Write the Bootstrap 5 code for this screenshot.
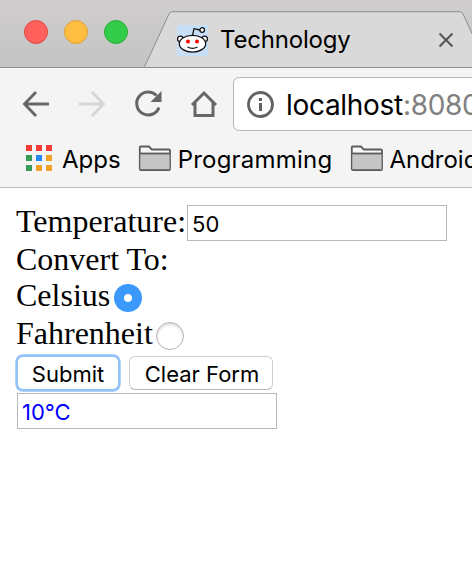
<!DOCTYPE html>
<html lang="en">
<head>
<meta charset="utf-8">
<meta name="viewport" content="width=device-width, initial-scale=1">
<title>Technology</title>
<link href="https://cdn.jsdelivr.net/npm/bootstrap@5.3.0/dist/css/bootstrap.min.css" rel="stylesheet">
<style>
body{width:472px;height:566px;font-family:Inter,"Liberation Sans",sans-serif;font-size:24px;line-height:30px;color:#000;background:#fff}
svg{display:block;flex:none}
.strip{height:68px;background:linear-gradient(#d0cecd,#c4c4c4);border-bottom:1px solid #8e8e8e}
.lights{gap:16px;padding:20px 0 0 24px}
.light{width:24px;height:24px;border:1px solid #df4744;background:#fe605b}
.light.amber{border-color:#dea034;background:#febe41}
.light.green{border-color:#24ae38;background:#34ca4a}
.tab{width:344px;height:56px;margin:11px 0 0 16px;padding-left:33px}
.tab-shape{left:0;top:0}
.favicon{margin-top:3px}
.tab-title{margin:1px 0 0 12px;letter-spacing:-.2px}
.tab-close{margin:2px 34px 0 auto}
.toolbar-row{height:72px;padding:9px 0 0 22px;background:#f4f4f4}
.nav-icons{height:54px}
.omni{width:300px;height:54px;margin-left:15px;padding-left:12px;border:1px solid #b5b5b5;border-radius:6px;background:#fff;font-size:28px}
.omni-text{margin:2px 0 0 12px;letter-spacing:-.3px}
.port{color:#808080}
.bookmarks{height:48px;background:#f4f4f4;border-bottom:1px solid #bcbcbc;padding:0 0 11px 26px}
.bookmarks span{margin-top:3px}
.apps{width:26px;grid-template-columns:repeat(3,6px);gap:4px;margin-right:10px}
.apps i{width:6px;height:6px;background:#f1a325}
.apps .r{background:#f33b36}.apps .g{background:#379c57}.apps .b{background:#2489f4}
.prog{margin-left:5px;letter-spacing:.22px}
.page{padding:14px 0 0 16px;font-family:"Liberation Serif",serif;font-size:32px}
.line{height:37px;line-height:37px}
.line.tall{height:38px;line-height:38px}
.line.drop{padding-top:1px}
.field{width:260px;height:36px;border:1px solid #b9b9b9;border-radius:0;padding:2px 4px 0;background:#fff;font-family:Inter,"Liberation Sans",sans-serif;font-size:22px;line-height:32px;color:#000;outline:0}
#temp{margin:4px 0 0 1px}
.field.result{color:#00f;margin:3px 0 0 1px}
.dot{width:28px;height:28px;margin:6px 0 0 3px;appearance:none;border:1px solid #b2b2b2;border-radius:50%;background:#fff;box-shadow:inset 0 2px 3px #ddd}
.dot:checked{margin:4px 0 0 4px;border:0;background:radial-gradient(circle,#fff 0 3.6px,#3b99fc 4.4px);box-shadow:none}
.push{height:34px;padding:2px 0 0;border:1px solid #cfcfcf;border-bottom-color:#b5b5b5;border-radius:6px;background:#fff;color:#000;font-family:Inter,"Liberation Sans",sans-serif;font-size:22px;line-height:30px}
.push.main{width:100px;height:32px;margin:1px 11px 0 2px;border:0;box-shadow:0 0 0 2.7px #91c3f8;border-radius:5px}
.push.wide{width:144px;padding-left:2px}
</style>
<script src="https://cdn.jsdelivr.net/npm/bootstrap@5.3.0/dist/js/bootstrap.bundle.min.js"></script>
</head>
<body class="overflow-hidden">
<header class="overflow-hidden">
  <div class="strip d-flex overflow-hidden">
    <div class="lights d-flex flex-shrink-0"><span class="light rounded-circle"></span><span class="light amber rounded-circle"></span><span class="light green rounded-circle"></span></div>
    <div class="tab position-relative d-flex align-items-center flex-shrink-0">
      <svg class="tab-shape position-absolute" width="344" height="57"><path d="M0 57L25 3Q26 .7 28 .7H316Q318 .7 319 3L344 57" fill="#d9d9d9" stroke="#8e8e8e"/></svg>
      <svg class="favicon position-relative" width="31" height="31" viewBox="0 0 31 31"><path fill="#c6def6" d="M0 0h31v31H0z"/><g fill="#fff" stroke="#111" stroke-width="1.3"><circle cx="3.3" cy="14" r="2.8"/><circle cx="27.7" cy="14" r="2.8"/><ellipse cx="15.5" cy="18.7" rx="13.2" ry="8.4"/><path d="M15.500 10.500L17 3.700L23 5" fill="none"/><circle cx="25.2" cy="5" r="2.3"/><path d="M10.500 22q5 2.800 10 0" fill="none"/></g><circle cx="11" cy="16.4" r="2" fill="#f00"/><circle cx="20" cy="16.4" r="2" fill="#f00"/></svg>
      <span class="tab-title position-relative">Technology</span>
      <svg class="tab-close position-relative" width="16" height="16" viewBox="0 0 16 16"><path d="M1.500 1.500l13 13M14.500 1.500L1.500 14.500" stroke="#555" stroke-width="2"/></svg>
    </div>
  </div>
  <div class="toolbar-row d-flex">
    <div class="nav-icons d-flex align-items-center flex-shrink-0">
      <svg width="28" height="28" viewBox="0 0 28 28" fill="none" stroke="#666" stroke-width="2.8"><path d="M27 14H3M14 2L2.500 14L14 26"/></svg>
      <svg class="ms-4" width="32" height="28" viewBox="-4 0 32 28" fill="none" stroke="#d6d6d6" stroke-width="2.8"><path d="M1 14h24M14 2l11.500 12L14 26"/></svg>
      <svg class="ms-4" width="36" height="28" viewBox="-4 0 36 28" fill="none" stroke="#666" stroke-width="3"><path d="M25 17.500A11.500 11.500 0 1 1 22.500 5.500"/><path d="M27.500 1v11H16.500z" fill="#666" stroke="none"/></svg>
      <svg class="ms-4" width="28" height="28" viewBox="0 0 28 28" fill="none" stroke="#666" stroke-width="3"><path d="M2 15L14 3l12 12M5 12.500v13h18V12.500"/></svg>
    </div>
    <div class="omni d-flex align-items-center flex-shrink-0">
      <svg width="28" height="28" viewBox="0 0 28 28"><circle cx="14.500" cy="14.500" r="12" fill="none" stroke="#636363" stroke-width="2.8"/><path d="M13 8h3v3h-3zM13 13h3v8h-3z" fill="#636363"/></svg>
      <span class="omni-text">localhost<span class="port">:8080</span></span>
    </div>
  </div>
  <div class="bookmarks d-flex align-items-center text-nowrap">
    <div class="apps d-grid flex-shrink-0"><i class="r"></i><i class="r"></i><i class="r"></i><i class="g"></i><i class="b"></i><i></i><i class="g"></i><i></i><i></i></div>
    <span>Apps</span>
    <svg class="ms-3" width="36" height="28" viewBox="-1 0 36 28"><path d="M1.800 25V3.500q0-1 1-1h8l3 3H31q1 0 1 1V25q0 1-1 1H3q-1.200 0-1.200-1z" fill="#f7f7f7" stroke="#5c5c5c" stroke-width="1.800"/><path d="M2.500 10h29v15.200h-29z" fill="#c5c5c5"/><path d="M2 9.500h30" stroke="#5c5c5c" stroke-width="1.800"/></svg>
    <span class="prog">Programming</span>
    <svg class="ms-3" width="37" height="28" viewBox="-2 0 37 28"><path d="M1.800 25V3.500q0-1 1-1h8l3 3H31q1 0 1 1V25q0 1-1 1H3q-1.200 0-1.200-1z" fill="#f7f7f7" stroke="#5c5c5c" stroke-width="1.800"/><path d="M2.500 10h29v15.200h-29z" fill="#c5c5c5"/><path d="M2 9.500h30" stroke="#5c5c5c" stroke-width="1.800"/></svg>
    <span class="ms-1">Android</span>
  </div>
</header>
<main>
  <form class="page">
    <div class="line tall d-flex align-items-center"><label for="temp">Temperature:</label><input class="field" id="temp" value="50"></div>
    <div class="line drop">Convert To:</div>
    <div class="line d-flex align-items-center"><label for="cel">Celsius</label><input class="dot" type="radio" name="unit" id="cel" checked></div>
    <div class="line tall d-flex align-items-center"><label for="fah">Fahrenheit</label><input class="dot" type="radio" name="unit" id="fah"></div>
    <div class="d-flex pt-1"><button class="push main" type="button">Submit</button><button class="push wide" type="button">Clear Form</button></div>
    <input class="field result d-block" value="10°C" aria-label="Result">
  </form>
</main>
</body>
</html>
